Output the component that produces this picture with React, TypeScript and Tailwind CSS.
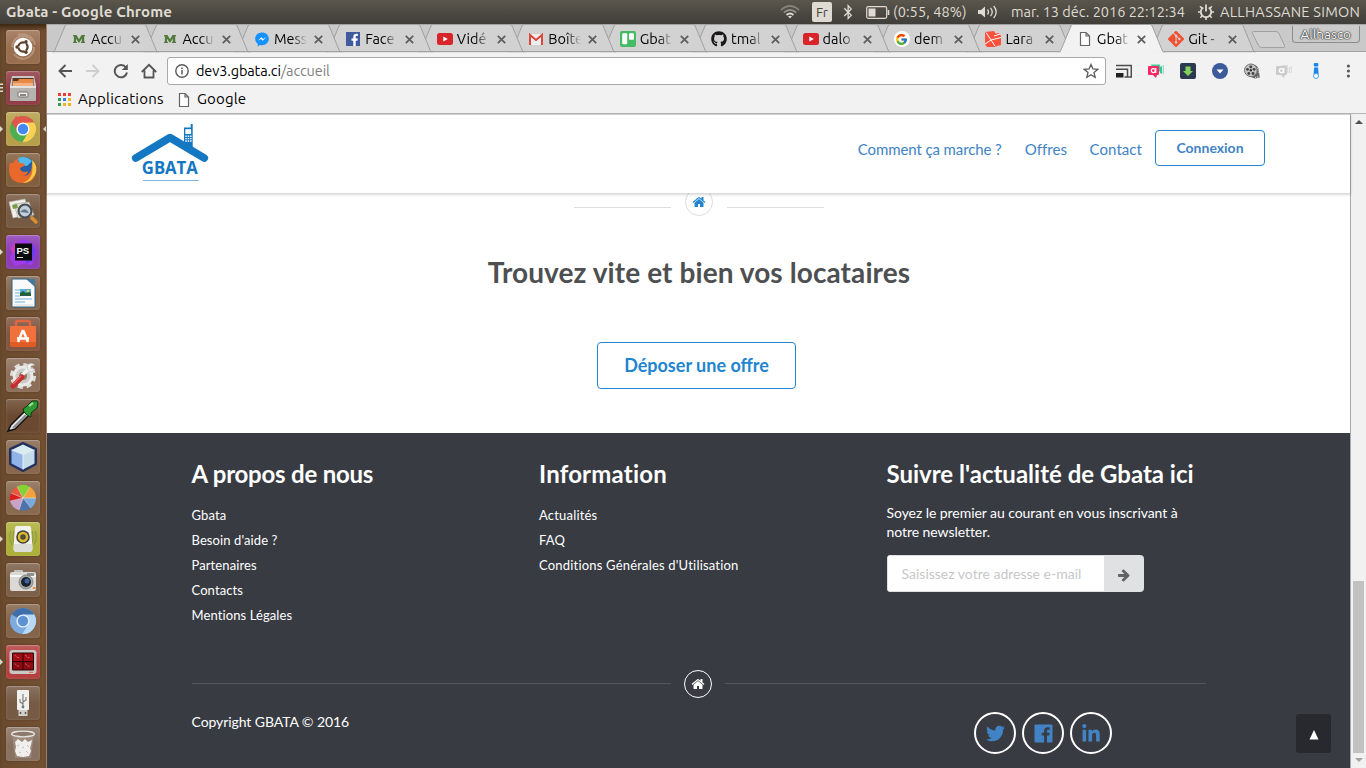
import type { ReactNode } from "react";
import { FaTwitter, FaLinkedinIn, FaBluetoothB, FaGithub } from "react-icons/fa";
import { FcGoogle } from "react-icons/fc";
import { SiGit } from "react-icons/si";

const UI = "font-['Ubuntu','Noto_Sans',sans-serif]";

function HomeGlyph({ className }: { className: string }) {
  return (
    <svg viewBox="0 0 1792 1792" className={className} fill="currentColor">
      <path d="M1472 992v480q0 26-19 45t-45 19h-384v-384h-256v384h-384q-26 0-45-19t-19-45v-480q0-1 .5-3t.5-3l575-474 575 474q1 2 1 6zm223-69l-62 74q-8 9-21 11h-3q-13 0-21-7l-692-577-692 577q-12 8-24 7-13-2-21-11l-62-74q-8-10-7-23.5t11-21.5l719-599q32-26 76-26t76 26l244 204v-195q0-14 9-23t23-9h192q14 0 23 9t9 23v408l219 182q10 8 11 21.5t-7 23.5z" />
    </svg>
  );
}

/* ---------- System bar ---------- */

function SystemBar() {
  return (
    <div className={`flex h-6 shrink-0 items-center bg-gradient-to-b from-[#5a564c] to-[#403e39] pl-[6px] text-[#dfdbd2] ${UI}`}>
      <span className="w-[774px] text-[15px] leading-6 font-bold tracking-[0.15px] whitespace-nowrap">Gbata - Google Chrome</span>
      <svg viewBox="0 0 20 14" className="h-[14px] w-5" fill="none" strokeWidth="1.7">
        <path d="M1 5 Q10 -3 19 5" stroke="#86827a" />
        <path d="M3.8 7.6 Q10 2 16.2 7.6" stroke="#99958c" />
        <path d="M6.5 10 Q10 7 13.5 10" stroke="#dfdbd2" />
        <path d="M8 11.3 L10 13.4 L12 11.3 Q10 10 8 11.3Z" fill="#dfdbd2" stroke="none" />
      </svg>
      <span className="ml-3 flex h-5 w-5 items-center justify-center rounded-[2px] bg-[#dfdbd2] text-[13.5px] text-[#45433d]">Fr</span>
      <FaBluetoothB className="ml-[9px] h-4 w-[14px]" />
      <svg viewBox="0 0 24 13" className="ml-[11px] h-[13px] w-6" fill="none" stroke="#dfdbd2">
        <rect x=".7" y=".7" width="20" height="11.6" rx="1.5" strokeWidth="1.2" />
        <path d="M22.5 4v5" strokeWidth="1.6" />
        <rect x="2.5" y="2.5" width="7" height="8" fill="#dfdbd2" stroke="none" />
      </svg>
      <span className="ml-[3px] w-[75px] text-[14.5px] tracking-[0.1px] whitespace-nowrap">(0:55, 48%)</span>
      <svg viewBox="0 0 20 14" className="ml-[10px] h-[14px] w-5" fill="none" stroke="#dfdbd2" strokeWidth="1.3">
        <path d="M0 5h3l4-3.5v11L3 9H0Z" fill="#dfdbd2" stroke="none" />
        <path d="M9.5 4.5q2 2.500 0 5M12.500 2.800q3.500 4.200 0 8.400M15.700 1q5 6 0 12" />
      </svg>
      <span className="ml-[13px] w-[175px] text-[14.5px] whitespace-nowrap">mar. 13 déc. 2016 22:12:34</span>
      <svg viewBox="0 0 16 16" className="ml-[12px] h-4 w-4" fill="none" stroke="#dfdbd2">
        <path d="M5.300 3.600a5.200 5.200 0 1 0 5.400 0" strokeWidth="1.800" />
        <path d="M8 .500v7" strokeWidth="1.800" />
        <path d="M0 8h2.500M13.500 8H16M2 2.300l2 2M14 2.300l-2 2M2.300 13.700l2-2M13.700 13.700l-2-2M8 13v3" strokeWidth="1.600" />
      </svg>
      <span className="ml-[6px] text-[14.5px] tracking-[0.27px] whitespace-nowrap">ALLHASSANE SIMON</span>
    </div>
  );
}

/* ---------- Launcher ---------- */

type Tile = { name: string; bg: string; running?: "one" | "many"; focused?: boolean; art: ReactNode };

const tiles: Tile[] = [
  {
    name: "dash",
    bg: "bg-[#9a6f50]",
    art: (
      <>
        <path d="M6 17a11 11 0 0 1 20-6M28 17a11 11 0 0 1-20 7M12 5a13 13 0 0 1 17 10" fill="none" stroke="#c6a791" strokeWidth="2" opacity=".6" />
        <circle cx="17" cy="17" r="9.300" fill="#fff" />
        <circle cx="17" cy="17" r="4.600" fill="none" stroke="#5c402c" strokeWidth="2.300" />
        <path d="M17 17L8 17M17 17l4.500-8M17 17l4.500 8" stroke="#fff" strokeWidth="1" />
        <circle cx="11" cy="17" r="1.700" fill="#5c402c" />
        <circle cx="20" cy="11.800" r="1.700" fill="#5c402c" />
        <circle cx="20" cy="22.200" r="1.700" fill="#5c402c" />
      </>
    ),
  },
  {
    name: "files",
    bg: "bg-[#913c47]",
    running: "many",
    art: (
      <>
        <path d="M6 5h22l2 9v15H4V14Z" fill="#c9c7c3" />
        <path d="M6.500 7h21v8h-21Z" fill="#5b3524" />
        <path d="M7 10h5l1-2h14v8H7Z" fill="#e78a45" />
        <path d="M7 12h20v4H7Z" fill="#f5b183" />
        <rect x="4" y="15" width="26" height="15" rx="1" fill="#b5b3af" />
        <rect x="4" y="15" width="26" height="2" fill="#e3e1dd" />
        <rect x="12" y="21" width="10" height="5" rx="1" fill="#eee" stroke="#77736f" />
        <path d="M14 24h6" stroke="#66625d" strokeWidth="1.500" />
      </>
    ),
  },
  {
    name: "chrome",
    bg: "bg-[#b6a04b]",
    running: "one",
    focused: true,
    art: (
      <>
        <circle cx="17" cy="17" r="13" fill="#4caf50" />
        <path d="M17 17L5.700 10.500A13 13 0 0 1 28.300 10.500Z" fill="#e2574c" />
        <path d="M17 10.500h11.300A13 13 0 0 1 16.500 30l6.200-10.300Z" fill="#f9cf54" />
        <path d="M5.700 10.500L10 4l12 6.500H17L11 14.500l.4 5.200Z" fill="#e2574c" />
        <circle cx="17" cy="17" r="6.600" fill="#fff" />
        <circle cx="17" cy="17" r="5.200" fill="#4688f1" />
      </>
    ),
  },
  {
    name: "firefox",
    bg: "bg-[#82603f]",
    art: (
      <>
        <circle cx="18" cy="16" r="12" fill="#245fa8" />
        <path d="M12 5q8-3 14 3l-5 5-8-1Z" fill="#54b8e8" />
        <path d="M4 9q1 2 3 1 2-4 5-5-1 4 2 5 4 0 5 2-2 2-5 3 0 3 4 4 3 0 4-1 0 4-5 5 9 0 9-13 5 4 4 10-2 10-13 10Q4 30 3 18 3 12 4 9Z" fill="#e8692b" />
        <path d="M26 7q7 6 3 15-5 8-12 8 8-4 9-10 1-4 0-13Z" fill="#f8c73f" />
      </>
    ),
  },
  {
    name: "image viewer",
    bg: "bg-[#765a43]",
    art: (
      <>
        <path d="M3 8l16-3 4 15-16 4Z" fill="#f1f0e9" stroke="#b6b5ac" strokeWidth=".6" />
        <path d="M8 10l15-2 5 13-16 3Z" fill="#e0e3d3" stroke="#aaa" strokeWidth=".6" />
        <path d="M6 11l5-1 1 4-5 1Z" fill="#7c9a48" />
        <circle cx="19" cy="17" r="6.500" fill="#b9cada" fillOpacity=".8" stroke="#4b4e52" strokeWidth="2.200" />
        <path d="M14 18q5-6 9 1Z" fill="#63798a" />
        <path d="M24 22l3 2" stroke="#888" strokeWidth="2" />
        <path d="M26 24l4 4" stroke="#d9912d" strokeWidth="3.500" strokeLinecap="round" />
      </>
    ),
  },
  {
    name: "phpstorm",
    bg: "bg-[#8d3eb5]",
    running: "one",
    art: (
      <>
        <path d="M5 9L18 4l9 5 3 9-4 12-9-1-8 2-5-8 2-6Z" fill="#a23bea" />
        <path d="M4 14l5-7 10 4-6 12Z" fill="#cc3bbc" />
        <path d="M26 8l4 8-3 10-8 3Z" fill="#6e3df0" />
        <rect x="9" y="8.500" width="17" height="17" fill="#0a0a0c" />
        <text x="10.500" y="18.500" fontSize="9.500" fontWeight="700" fill="#fff" fontFamily="Liberation Sans">PS</text>
        <path d="M11 22.500h6" stroke="#ddd" strokeWidth="1.200" />
      </>
    ),
  },
  {
    name: "writer",
    bg: "bg-[#85674e]",
    art: (
      <>
        <path d="M6 3h17l6 7v21H6Z" fill="#fafafa" stroke="#2b668c" />
        <path d="M20 3h9v8Z" fill="#417a9e" />
        <path d="M9 14h5M9 17h5M9 20h5M9 23h17M9 26h10" stroke="#76b2d8" />
        <rect x="14" y="13" width="11" height="7" fill="#5aaedd" />
        <path d="M14 20v-3l3-2 3 2 3-1 2 1v3Z" fill="#24603f" />
        <circle cx="22" cy="15" r="1.200" fill="#f8cd47" />
        <path d="M8 29h19" stroke="#dcdcdc" />
      </>
    ),
  },
  {
    name: "software",
    bg: "bg-[#805641]",
    art: (
      <>
        <path d="M10 11V6q0-2 2-2h10q2 0 2 2v5" fill="none" stroke="#de6640" strokeWidth="2.500" />
        <path d="M4 9h26v19l-1 2H5l-1-2Z" fill="#f0713c" />
        <path d="M4 25h26v3l-1 2H5l-1-2Z" fill="#e15b25" />
        <path d="M17 13l-5 12M17 13l5 12M11 21.500h12" stroke="#fff" strokeWidth="2.500" fill="none" />
      </>
    ),
  },
  {
    name: "settings",
    bg: "bg-[#8c6e59]",
    art: (
      <>
        <circle cx="17" cy="18" r="9" fill="#cbcbc7" />
        <circle cx="17" cy="18" r="11" fill="none" stroke="#dedfdb" strokeWidth="4" strokeDasharray="5 3.640" />
        <circle cx="17" cy="18" r="9" fill="none" stroke="#e8e8e5" strokeWidth="3" />
        <circle cx="17" cy="18" r="4" fill="#947760" />
        <path d="M16 17l9-8" stroke="#f1f1ef" strokeWidth="3.500" />
        <path d="M21 8q3-5 8-1l-4 1 0 3 4 0q-3 5-7 1Z" fill="#f1f1ef" stroke="#aaa" strokeWidth=".5" />
        <path d="M7 28l9-9" stroke="#c62c2e" strokeWidth="5" strokeLinecap="round" />
        <path d="M7 26l8-8" stroke="#e46c65" strokeWidth="1.200" />
      </>
    ),
  },
  {
    name: "colour picker",
    bg: "bg-[#6a4930]",
    art: (
      <>
        <path d="M2 32l3-6L19 12l4 4L9 30Z" fill="#e8e8e8" stroke="#111" strokeWidth="1.500" />
        <path d="M7 29l13-13" stroke="#8b8b8b" strokeWidth="2" />
        <path d="M17 10l3-2 6-6h5l1 2-1 5-6 5 0 4-4-2-3-3Z" fill="#2f9a35" stroke="#0b3d10" />
        <path d="M23 7l4-3" stroke="#9ce795" strokeWidth="2" />
      </>
    ),
  },
  {
    name: "virtualbox",
    bg: "bg-[#87684e]",
    art: (
      <>
        <path d="M17 3l13 6v15L17 31 4 24V9Z" fill="#24315f" stroke="#24315f" strokeWidth="2" strokeLinejoin="round" />
        <path d="M17 4.500l11.500 5.500-11.500 4.500L5.500 10Z" fill="#d9edf0" />
        <path d="M5.500 10l11.500 4.500v15L5.500 23.500Z" fill="#90b3e8" />
        <path d="M28.500 10l-11.500 4.500v15l11.500-6Z" fill="#c5dbe7" />
        <path d="M5.500 10l11.500 4.500 11.500-4.500M17 14.500v15" fill="none" stroke="#f2fbff" strokeWidth=".8" />
      </>
    ),
  },
  {
    name: "colour wheel",
    bg: "bg-[#8a6a50]",
    art: (
      <>
        <path d="M17 17L11 5.500A13 13 0 0 1 24 6Z" fill="#82d334" />
        <path d="M17 17L24 6a13 13 0 0 1 6 11Z" fill="#f4a13c" />
        <path d="M17 17h13a13 13 0 0 1-5 10Z" fill="#7aa9dd" />
        <path d="M17 17l8 10a13 13 0 0 1-12 2Z" fill="#4b73ad" />
        <path d="M17 17l-4 12a13 13 0 0 1-9-9Z" fill="#c8a2c9" />
        <path d="M17 17L4 20a13 13 0 0 1 1-8Z" fill="#d91d20" />
        <path d="M17 17L5 12a13 13 0 0 1 6-6.500Z" fill="#e9573e" />
        <path d="M17 17L4.300 20M17 17L5 12M17 17l-6-11.500M17 17l7-11M17 17h13M17 17l8 10M17 17l-4 12" stroke="#f2e8df" strokeWidth=".5" />
      </>
    ),
  },
  {
    name: "sound",
    bg: "bg-[#adb03a]",
    running: "one",
    art: (
      <>
        <path d="M5 9q-3 6 1 14M29 9q3 6-1 14M8 9q-2 6 0 12M26 9q2 6 0 12" fill="none" stroke="#8d9a48" strokeWidth="1.100" />
        <path d="M11 4h12q2 0 2 2l1.500 20q0 4-3 4h-13q-3 0-3-4L9 6q0-2 2-2Z" fill="#f2f2f0" />
        <path d="M8 22h18.200l.3 5q-.5 3-3 3h-13q-3 0-3-3Z" fill="#dcdcd8" />
        <circle cx="17" cy="15" r="6.800" fill="#42453f" />
        <circle cx="17" cy="15" r="4" fill="none" stroke="#e0b92d" strokeWidth="2.500" />
        <circle cx="17" cy="15" r="1.700" fill="#5a5327" />
      </>
    ),
  },
  {
    name: "camera",
    bg: "bg-[#7c6049]",
    art: (
      <>
        <rect x="8" y="7" width="9" height="4" rx="1" fill="#c2c2bf" />
        <rect x="4" y="9" width="26" height="19" rx="2" fill="#dad9d5" />
        <path d="M4 13h26" stroke="#f6f6f4" strokeWidth="2" />
        <rect x="21" y="10" width="7" height="3" fill="#8e9190" />
        <circle cx="20" cy="19" r="7" fill="#a8a8a6" stroke="#777" strokeWidth=".8" />
        <circle cx="20" cy="19" r="5" fill="#1b2430" />
        <circle cx="21" cy="18" r="2.500" fill="#40639c" />
        <rect x="27" y="24" width="2.500" height="2" fill="#e58a2d" />
      </>
    ),
  },
  {
    name: "chromium",
    bg: "bg-[#84644a]",
    art: (
      <>
        <circle cx="17" cy="17" r="13" fill="#7dabe0" />
        <path d="M17 17L5.700 10.500A13 13 0 0 1 28.300 10.500Z" fill="#3f6fa9" />
        <path d="M17 10.500h11.300A13 13 0 0 1 16.500 30l6.200-10.300Z" fill="#b8d9f5" />
        <circle cx="17" cy="17" r="6.600" fill="#e6f1fb" />
        <circle cx="17" cy="17" r="5.200" fill="#5f92d2" />
      </>
    ),
  },
  {
    name: "terminator",
    bg: "bg-[#b3403f]",
    running: "one",
    art: (
      <>
        <rect x="3.500" y="5" width="27" height="24" rx="3" fill="#c9c7c3" />
        <rect x="6" y="7.500" width="22" height="18" rx="1" fill="#2b0709" />
        <rect x="7" y="8.500" width="9.500" height="7.500" fill="#a50d14" />
        <rect x="17.500" y="8.500" width="9.500" height="7.500" fill="#a50d14" />
        <rect x="7" y="17" width="9.500" height="7.500" fill="#8c0a10" />
        <rect x="17.500" y="17" width="9.500" height="7.500" fill="#8c0a10" />
        <path d="M8.500 10l2 1.500M11 12.500h2M19 10l2 1.500M21.500 12.500h2M8.500 18.500l2 1.500M11 21h2M19 18.500l2 1.500M21.500 21h2" stroke="#f2aaa9" strokeWidth=".5" />
        <path d="M23 27.300h4" stroke="#ed5a42" />
      </>
    ),
  },
  {
    name: "usb",
    bg: "bg-[#765a44]",
    art: (
      <>
        <rect x="11" y="4" width="12" height="20" rx="1" fill="#f0f0ee" />
        <rect x="12.500" y="24" width="9" height="6" fill="#cfcfcc" />
        <path d="M14.500 26v2M19.500 26v2" stroke="#555" strokeWidth="1.500" />
        <path d="M17 8v13M17 18l-3-2v-3M17 16l3-2v-3" fill="none" stroke="#777" strokeWidth="1.100" />
        <circle cx="17" cy="21" r="1.400" fill="#777" />
      </>
    ),
  },
  {
    name: "trash",
    bg: "bg-[#887160]",
    art: (
      <>
        <path d="M6 7h22l-3 24H9Z" fill="#a39487" opacity=".7" />
        <ellipse cx="17" cy="7" rx="11.500" ry="2.800" fill="#8d7c6e" stroke="#e7e4e0" strokeWidth="1.300" />
        <path d="M9 15l3-3 4 3 3-3 3 3 4-2-1 5-1 3 1 3-2 5-6 1-6-1-2-5 1-4Z" fill="#f0efed" />
        <path d="M11 19l2-1M21 18l2 2M13 25l2 1M20 24l2 2M16 21l2-1" stroke="#c4c1bd" />
      </>
    ),
  },
];

function Launcher() {
  return (
    <aside className="flex w-[47px] shrink-0 flex-col gap-[7px] border-r border-[#a07f62] bg-gradient-to-r from-[#6a4a2d] to-[#735033] pt-[6px] shadow-[inset_0_6px_5px_-3px_#38230f]">
      {tiles.map((t) => (
        <div key={t.name} className="flex h-[34px] items-center">
          <svg viewBox="0 0 6 12" className="h-3 w-[6px]" fill="#dcd8d2">
            {t.running === "one" && <path d="M0 3l3 3-3 3Z" />}
            {t.running === "many" && <path d="M0 1.500h3v1.500H0ZM0 5h3v1.500H0ZM0 8.500h3V10H0Z" />}
          </svg>
          <div className={`h-[34px] w-[34px] rounded-[3px] ${t.bg} shadow-[inset_0_1px_0_rgba(255,255,255,0.2),inset_0_0_3px_rgba(255,255,255,0.15),0_0_2px_rgba(40,20,5,0.4)]`}>
            <svg viewBox="0 0 34 34" className="h-[34px] w-[34px] rounded-[3px] bg-gradient-to-b from-white/15 via-transparent to-transparent">{t.art}</svg>
          </div>
          {t.focused && (
            <svg viewBox="0 0 6 12" className="h-3 w-[6px]" fill="#dcd8d2">
              <path d="M6 3L3 6l3 3Z" />
            </svg>
          )}
        </div>
      ))}
    </aside>
  );
}

/* ---------- Browser tabs ---------- */

const mongo = (
  <svg viewBox="0 0 16 16" className="h-4 w-4" fill="#4f7a3c">
    <path d="M2 4h3.500L8 8.200 10.500 4H14v1.300h-.8v5.400h.8V12H10v-1.300h.8V7.500L8.400 11.500h-.9L5 7.500v3.200h.9V12H2v-1.300h.9V5.300H2Z" />
  </svg>
);
const youtube = (
  <svg viewBox="0 0 16 16" className="h-4 w-4">
    <rect y="2" width="16" height="12" rx="2.500" fill="#d9252a" />
    <path d="M6.300 5.500l4.500 2.500-4.500 2.500Z" fill="#fff" />
  </svg>
);
const pageIcon = (
  <svg viewBox="0 0 16 16" className="h-4 w-4" fill="#fff" stroke="#666" strokeWidth="1.200">
    <path d="M3.500 1.500h5.500l3.500 3.500V14.500h-9ZM9 1.500V5h3.500" />
  </svg>
);

const tabs: { label: string; icon: ReactNode; active?: boolean }[] = [
  { label: "Accu", icon: mongo },
  { label: "Accu", icon: mongo },
  {
    label: "Mess",
    icon: (
      <svg viewBox="0 0 16 16" className="h-4 w-4">
        <path d="M8 1.500C4 1.500 1.200 4.300 1.200 7.800c0 2 .9 3.700 2.500 4.900V15.500l2.400-1.500c.6.200 1.200.2 1.900.2 4 0 6.800-2.800 6.800-6.400S12 1.500 8 1.500Z" fill="#1592ff" />
        <path d="M4 9.800l3.300-3.500 1.800 1.800 3-1.800-3.300 3.500L7 8Z" fill="#fff" />
      </svg>
    ),
  },
  {
    label: "Face",
    icon: (
      <svg viewBox="0 0 16 16" className="h-4 w-4">
        <rect x="1" y="1" width="14" height="14" fill="#3f5b9e" />
        <path d="M8.300 15V9.700H6.500V7.400h1.800V5.800c0-2 1.200-3 2.900-3h1.600v2.200h-1.100c-.9 0-1 .4-1 1v1.400h2.100l-.3 2.300h-1.800V15Z" fill="#fff" />
      </svg>
    ),
  },
  { label: "Vidé", icon: youtube },
  {
    label: "Boîte",
    icon: (
      <svg viewBox="0 0 16 16" className="h-4 w-4">
        <rect x="1" y="3" width="14" height="11" rx="1" fill="#eee" />
        <path d="M2 14V4l6 5 6-5v10" fill="none" stroke="#d8483b" strokeWidth="2" />
      </svg>
    ),
  },
  {
    label: "Gbat",
    icon: (
      <svg viewBox="0 0 16 16" className="h-4 w-4">
        <rect width="16" height="16" rx="2" fill="#47bb63" />
        <rect x="2.200" y="2.200" width="5" height="11" rx="1" fill="#fff" />
        <rect x="9" y="2.200" width="5" height="6.500" rx="1" fill="#fff" />
      </svg>
    ),
  },
  { label: "tmal", icon: <FaGithub className="h-4 w-4 text-[#191717]" /> },
  { label: "dalo", icon: youtube },
  {
    label: "dem",
    icon: (
      <span className="flex h-4 w-4 items-center justify-center rounded-full bg-white">
        <FcGoogle className="h-[13px] w-[13px]" />
      </span>
    ),
  },
  {
    label: "Lara",
    icon: (
      <svg viewBox="0 0 16 16" className="h-4 w-4">
        <path d="M0 1L9 0l1.500 2.500L14 2l2 3v9l-7 2H2L0 13.500Z" fill="#fb503b" />
        <path d="M1 1.500L6 9l10-2.500M6 9l4 6M9 5l6-2M0 13l6-4" fill="none" stroke="#fff" strokeWidth="1" />
      </svg>
    ),
  },
  { label: "Gbat", icon: pageIcon, active: true },
  { label: "Git -", icon: <SiGit className="h-4 w-4 text-[#f05133]" /> },
];

const layers = ["z-[13]", "z-[12]", "z-[11]", "z-10", "z-[9]", "z-[8]", "z-[7]", "z-[6]", "z-[5]", "z-[4]", "z-[3]", "z-20", "z-[1]"];

function TabStrip() {
  return (
    <div className="flex h-7 bg-[#c9c9c9] pl-[6px] shadow-[inset_0_-1px_0_#a1a1a1,inset_0_1px_0_#a8a8a8]">
      {tabs.map((t, i) => (
        <div key={i} className={`relative flex h-7 w-[91.45px] shrink-0 items-center pl-[18px] ${layers[i]}`}>
          <svg viewBox="0 0 106 29" className="absolute top-0 left-0 h-[29px] w-[106px] overflow-visible">
            <path
              d="M0 28.500L1.500 27 12 2Q12.500.500 14 .500H91Q92.500.500 93.200 2L103.500 27 105 28.500"
              fill={t.active ? "#f2f2f2" : "#d2d2d2"}
              stroke="#a0a0a0"
            />
            {t.active ? <path d="M1 28.700h103" stroke="#f2f2f2" /> : <path d="M0 27.500h106" stroke="#a1a1a1" />}
          </svg>
          <span className="relative mt-[2px] flex h-4 w-4 shrink-0">{t.icon}</span>
          <span className={`relative mt-[2px] ml-[4px] w-[33px] shrink-0 bg-gradient-to-r from-black from-55% to-transparent bg-clip-text text-[14.5px] leading-5 whitespace-nowrap text-transparent ${UI}`}>
            {t.label}
          </span>
          <svg viewBox="0 0 9 9" className="relative mt-[2px] ml-[7px] h-[9px] w-[9px] shrink-0" stroke="#5c5c5c" strokeWidth="1.700">
            <path d="M.8.800l7.400 7.400M8.200.800L.8 8.200" />
          </svg>
        </div>
      ))}
      <svg viewBox="0 0 36 20" className="mt-[6px] ml-[9px] h-5 w-9 shrink-0" fill="#d0d0d0" stroke="#a0a0a0">
        <path d="M3 1.500h22q2 0 3 2l5.500 12q1 2-1.500 2H10.500q-2 0-3-2L1.500 3.500q-.8-2 1.500-2Z" />
      </svg>
      <span className={`mt-[2px] ml-[5px] flex h-[17px] w-[68px] items-center justify-center rounded-b-[4px] border border-t-0 border-[#8b8b8b] bg-[#cbcbcb] text-[13.5px] text-white [text-shadow:0_0_2px_#222,0_0_1px_#222,0_0_1px_#222] ${UI}`}>
        Allhasco
      </span>
    </div>
  );
}

/* ---------- Toolbar ---------- */

function Toolbar() {
  return (
    <div className={`flex h-[34px] items-center bg-[#f2f2f2] pt-[3px] pl-[10px] ${UI}`}>
      <svg viewBox="0 0 16 16" className="h-4 w-4" fill="none" stroke="#555" strokeWidth="1.900">
        <path d="M15 8H2.500M8.500 2L2.500 8l6 6" />
      </svg>
      <svg viewBox="0 0 16 16" className="ml-3 h-4 w-4" fill="none" stroke="#cfcfcf" strokeWidth="1.900">
        <path d="M1 8h12.500M7.500 2l6 6-6 6" />
      </svg>
      <svg viewBox="0 0 16 16" className="ml-3 h-4 w-4" fill="none" stroke="#555" strokeWidth="2">
        <path d="M13 4.500A6.200 6.200 0 1 0 14 9.500" />
        <path d="M14.800 1v6H8.800Z" fill="#555" stroke="none" />
      </svg>
      <svg viewBox="0 0 16 16" className="ml-3 h-4 w-4" fill="none" stroke="#555" strokeWidth="1.800">
        <path d="M.8 9L8 1.800 15.200 9M3.500 7.500v7h9v-7" />
      </svg>
      <div className="ml-[10px] flex h-7 w-[939px] items-center rounded-[3px] border border-[#a9a9a9] bg-white pr-[6px] pl-[7px]">
        <svg viewBox="0 0 14 14" className="h-[14px] w-[14px]" fill="none" stroke="#5a5a5a">
          <circle cx="7" cy="7" r="6.200" strokeWidth="1.400" />
          <path d="M7 6v4.500M7 3.500v1.500" strokeWidth="1.500" />
        </svg>
        <span className="ml-[7px] flex-1 text-[14.5px] leading-5 tracking-[-0.12px] whitespace-nowrap text-black">
          dev3.gbata.ci<span className="text-[#808080]">/accueil</span>
        </span>
        <svg viewBox="0 0 16 16" className="h-4 w-4" fill="none" stroke="#5a5a5a" strokeWidth="1.300">
          <path d="M8 1.500l1.900 4.500 4.800.4-3.700 3.200 1.200 4.800L8 11.800l-4.200 2.600L5 9.600 1.300 6.400 6.100 6Z" />
        </svg>
      </div>
      <div className="ml-[10px] flex items-center gap-4">
        <svg viewBox="0 0 16 16" className="h-4 w-4" fill="none" stroke="#4c4c4c" strokeWidth="1.500">
          <path d="M0 2.500h15.300V14h-3M0 6.200h11.500V14H8.500" />
          <rect y="10" width="7.500" height="4.500" fill="#222" stroke="none" />
        </svg>
        <svg viewBox="0 0 16 16" className="h-4 w-4">
          <path d="M3 1.500h9l1 7H5Z" fill="#3ccf9a" />
          <path d="M12 4l2-1v8l-2-1Z" fill="#34c794" />
          <path d="M15.300 2v9" stroke="#7ad9b8" />
          <path d="M1 3h9q1 0 1 1v7q0 1-1 1H9l-1 3-3-3H1q-1 0-1-1V4q0-1 1-1Z" fill="#f72763" />
          <circle cx="5.300" cy="7.600" r="2" fill="none" stroke="#fff" strokeWidth="1.200" />
          <path d="M7.800 5v5" stroke="#fff" strokeWidth="1.200" />
        </svg>
        <svg viewBox="0 0 16 16" className="h-4 w-4">
          <rect width="16" height="16" rx="2" fill="#2b3a50" />
          <path d="M5.500 3.500h5v4.500H13l-5 5-5-5h2.500Z" fill="#7fd35d" />
        </svg>
        <svg viewBox="0 0 16 16" className="h-4 w-4">
          <circle cx="8" cy="8" r="8" fill="#3d5a9c" />
          <path d="M4.500 6.500h7L8 10.500Z" fill="#fff" />
        </svg>
        <svg viewBox="0 0 16 16" className="h-4 w-4">
          <path d="M8 1q7 1 7 8l.8 5.500-4.800 1-6-2Z" fill="#666" />
          <path d="M11 14.500l4-1M13.500 5l1 5" stroke="#ddd" strokeWidth="1" strokeDasharray="1.200 1" />
          <circle cx="6.800" cy="7.300" r="6.300" fill="#c4c4c4" stroke="#777" />
          <circle cx="6.800" cy="7.300" r="1.200" fill="#333" />
          <circle cx="6.800" cy="3.700" r="1.500" fill="#444" />
          <circle cx="3.500" cy="6.300" r="1.400" fill="#444" />
          <circle cx="10.100" cy="6.300" r="1.400" fill="#444" />
          <circle cx="4.800" cy="10.500" r="1.400" fill="#444" />
          <circle cx="9" cy="10.500" r="1.400" fill="#444" />
        </svg>
        <svg viewBox="0 0 16 16" className="h-4 w-4">
          <path d="M5 2h7v8h-2Z" fill="#dedede" />
          <path d="M15.300 3v7M13.300 4v6" stroke="#d6d6d6" />
          <path d="M1 3h9q1 0 1 1v7q0 1-1 1H9l-1 3-3-3H1q-1 0-1-1V4q0-1 1-1Z" fill="#cbcbcb" />
          <circle cx="5.300" cy="7.600" r="2" fill="none" stroke="#fff" strokeWidth="1.200" />
          <path d="M7.800 5v5" stroke="#fff" strokeWidth="1.200" />
        </svg>
        <svg viewBox="0 0 16 16" className="h-4 w-4">
          <rect x="5.800" y="0" width="4.500" height="3.500" rx="1" fill="#1b86e8" />
          <path d="M6.100 4.500h4l.5 7H5.600Z" fill="#1b86e8" />
          <circle cx="8" cy="13" r="2.500" fill="#fff" stroke="#4ea1ea" strokeWidth="1" />
        </svg>
        <svg viewBox="0 0 16 16" className="h-4 w-4" fill="#5a5a5a">
          <circle cx="8.400" cy="3" r="1.600" />
          <circle cx="8.400" cy="8" r="1.600" />
          <circle cx="8.400" cy="13" r="1.600" />
        </svg>
      </div>
    </div>
  );
}

const appDots = ["bg-[#ee3e36]", "bg-[#ee3e36]", "bg-[#ee3e36]", "bg-[#2e9e5b]", "bg-[#3c7de6]", "bg-[#f6b31b]", "bg-[#2e9e5b]", "bg-[#f6b31b]", "bg-[#f6b31b]"];

function BookmarksBar() {
  return (
    <div className={`flex h-7 items-center border-b border-[#b5b5b5] bg-[#f2f2f2] pl-[11px] text-[15px] text-black ${UI}`}>
      <span className="grid grid-cols-3 gap-[2px]">
        {appDots.map((c, i) => (
          <i key={i} className={`block h-[3px] w-[3px] ${c}`} />
        ))}
      </span>
      <span className="ml-[7px] w-[98px] tracking-[0.23px] whitespace-nowrap">Applications</span>
      {pageIcon}
      <span className="ml-[5px] tracking-[0.15px]">Google</span>
    </div>
  );
}

/* ---------- Site ---------- */

function Logo() {
  return (
    <svg viewBox="0 0 80 60" className="h-[60px] w-20">
      <path d="M4.800 35L39 14.700 73.200 35" fill="none" stroke="#1377c2" strokeWidth="7.800" strokeLinecap="round" strokeLinejoin="round" />
      <path d="M53 4.500h6.700V1h2v24l-8.700-4Z" fill="#1377c2" />
      <rect x="54.300" y="6.200" width="5.800" height="4.800" fill="#fff" />
      <path d="M54.300 13.200h6.300M54.300 15.600h6.300M54.300 18h6.300" stroke="#fff" strokeWidth="1.400" strokeDasharray="1.500 .9" />
      <text x="10.800" y="50.500" fontFamily="Open Sans, Noto Sans, sans-serif" fontWeight="700" fontSize="18" fill="#1377c2" textLength="56" lengthAdjust="spacingAndGlyphs">
        GBATA
      </text>
      <path d="M12 57.500h56" stroke="#7db6df" />
    </svg>
  );
}

function SiteHeader() {
  return (
    <header className="relative z-10 flex h-[78px] shrink-0 justify-between bg-white pr-[85px] pl-[84px] shadow-[0_1px_2px_1px_rgba(34,36,38,0.17)]">
      <div className="pt-[8px]">
        <Logo />
      </div>
      <nav className="flex items-start text-[15px] text-[#4183c4]">
        <a className="mt-[23px] mr-[23px] leading-[22px] tracking-[-0.1px]">Comment ça marche ?</a>
        <a className="mt-[23px] mr-[22.5px] leading-[22px] tracking-[0.05px] [font-variant-ligatures:none]">Offres</a>
        <a className="mt-[23px] mr-[13px] leading-[22px] tracking-[0.06px]">Contact</a>
        <a className="mt-[15px] flex h-9 w-[110px] items-center justify-center rounded-[4px] border border-[#2185d0] pb-[2px] text-[14px] font-bold">Connexion</a>
      </nav>
    </header>
  );
}

function Hero() {
  return (
    <section className="flex h-[240px] shrink-0 flex-col items-center overflow-hidden bg-white pl-px">
      <div className="-mt-[5px] flex w-[250px] items-start justify-between">
        <span className="mt-[19px] h-px w-[97px] bg-[#dcdddd]" />
        <span className="flex h-7 w-7 items-center justify-center rounded-full border border-[#dcdddd] text-[#2185d0]">
          <HomeGlyph className="h-[14px] w-[14px]" />
        </span>
        <span className="mt-[19px] h-px w-[97px] bg-[#dcdddd]" />
      </div>
      <h1 className="mt-[38px] text-[28px] leading-9 font-bold tracking-[0.09px] text-[#4d4f51]">Trouvez vite et bien vos locataires</h1>
      <button className="mt-[52px] mr-[5px] h-[47px] w-[199px] rounded-[4px] border border-[#2185d0] text-[18px] font-bold text-[#2185d0]">Déposer une offre</button>
    </section>
  );
}

function LinkColumn({ title, titleClass, listClass, links }: { title: string; titleClass: string; listClass: string; links: string[] }) {
  return (
    <div className="w-[347.5px] shrink-0">
      <h2 className={`text-[24px] leading-[30px] font-bold ${titleClass}`}>{title}</h2>
      <ul className={`mt-[14px] text-[13px] leading-[25px] ${listClass}`}>
        {links.map((l) => (
          <li key={l}>{l}</li>
        ))}
      </ul>
    </div>
  );
}

function SiteFooter() {
  return (
    <footer className="relative flex-1 bg-[#383b42] pt-[26px] pl-[144.5px] text-white [font-variant-ligatures:none]">
      <div className="flex h-[211px]">
        <LinkColumn title="A propos de nous" titleClass="tracking-[-0.22px]" listClass="tracking-[0.1px]" links={["Gbata", "Besoin d'aide ?", "Partenaires", "Contacts", "Mentions Légales"]} />
        <LinkColumn title="Information" titleClass="tracking-[0.2px]" listClass="tracking-[0.19px]" links={["Actualités", "FAQ", "Conditions Générales d'Utilisation"]} />
        <div className="w-[320px]">
          <h2 className="text-[24px] leading-[30px] font-bold whitespace-nowrap">Suivre l'actualité de Gbata ici</h2>
          <p className="mt-[14px] w-[310px] text-[14px] leading-[19px] tracking-[-0.06px]">Soyez le premier au courant en vous inscrivant à notre newsletter.</p>
          <div className="mt-[14px] flex h-[37px] w-[257px] overflow-hidden rounded-[4px]">
            <span className="flex flex-1 items-center border border-[#dfe0e1] bg-white pl-[14px] text-[14px] whitespace-nowrap text-[#c7c7c8]">Saisissez votre adresse e-mail</span>
            <span className="flex w-[38.500px] shrink-0 items-center justify-center bg-[#e0e1e2] pt-[2px] text-[#626364]">
              <svg viewBox="0 0 1792 1792" className="h-[14px] w-[14px]" fill="currentColor">
                <path d="M1600 960q0 54-37 91l-651 651q-39 37-91 37-51 0-90-37l-75-75q-38-38-38-91t38-91l293-293h-704q-52 0-84.500-37.500t-32.500-90.500v-128q0-53 32.500-90.500t84.500-37.500h704l-293-294q-38-36-38-90t38-90l75-75q38-38 90-38 53 0 91 38l651 651q37 35 37 90z" />
              </svg>
            </span>
          </div>
        </div>
      </div>
      <div className="flex w-[1014.5px] items-center justify-between">
        <span className="mb-[2px] h-px w-[479px] bg-[#54585b]" />
        <span className="flex h-7 w-7 items-center justify-center rounded-full border-[1.5px] border-white">
          <HomeGlyph className="h-[14px] w-[14px]" />
        </span>
        <span className="mb-[2px] h-px w-[481px] bg-[#54585b]" />
      </div>
      <div className="flex items-start pt-[14px]">
        <span className="w-[782.5px] text-[14px] leading-5 tracking-[-0.08px]">Copyright GBATA © 2016</span>
        <div className="flex gap-[6px] text-[#4183c4]">
          <span className="flex h-[42px] w-[42px] items-center justify-center rounded-full border-2 border-white">
            <FaTwitter className="h-[19px] w-[19px]" />
          </span>
          <span className="flex h-[42px] w-[42px] items-center justify-center rounded-full border-2 border-white">
            <svg viewBox="0 0 1792 1792" className="h-[21px] w-[21px]" fill="currentColor">
              <path d="M1579 128q35 0 60 25t25 60v1366q0 35-25 60t-60 25h-391v-595h199l30-232h-229v-148q0-56 23.500-84t91.500-28l122-1v-207q-63-9-178-9-136 0-217.500 80t-81.500 226v171h-200v232h200v595h-735q-35 0-60-25t-25-60v-1366q0-35 25-60t60-25h1366z" />
            </svg>
          </span>
          <span className="flex h-[42px] w-[42px] items-center justify-center rounded-full border-2 border-white">
            <FaLinkedinIn className="mt-[2px] h-[20px] w-[20px]" />
          </span>
        </div>
      </div>
      <button className="absolute right-[19px] bottom-[15px] flex h-[39px] w-[35px] items-center justify-center rounded-[3px] bg-[#27292e]">
        <svg viewBox="0 0 10 10" className="mt-[2px] h-[10px] w-[10px]" fill="#fff">
          <path d="M5 0l4.500 9.500h-9Z" />
        </svg>
      </button>
    </footer>
  );
}

function Scrollbar() {
  return (
    <div className="flex w-[16px] shrink-0 flex-col items-center justify-between border-l border-[#a9a9a9] bg-[#f1f1f1]">
      <svg viewBox="0 0 8 4" className="mt-[6px] h-1 w-2" fill="#505050">
        <path d="M4 0l4 4H0Z" />
      </svg>
      <div className="flex flex-col items-center">
        <div className="h-[172px] w-[11px] bg-[#c1c1c1]" />
        <svg viewBox="0 0 8 4" className="mt-[5px] mb-[6px] h-1 w-2" fill="#a3a3a3">
          <path d="M0 0h8L4 4Z" />
        </svg>
      </div>
    </div>
  );
}

export default function App() {
  return (
    <div className="flex h-[768px] w-[1366px] flex-col overflow-hidden bg-white">
      <SystemBar />
      <div className="flex min-h-0 flex-1">
        <Launcher />
        <div className="flex w-[1319px] flex-col">
          <TabStrip />
          <Toolbar />
          <BookmarksBar />
          <div className="flex min-h-0 flex-1">
            <main className="flex w-[1303px] flex-col border-t border-[#dcdcdc] font-['Lato',sans-serif]">
              <SiteHeader />
              <Hero />
              <SiteFooter />
            </main>
            <Scrollbar />
          </div>
        </div>
      </div>
    </div>
  );
}
